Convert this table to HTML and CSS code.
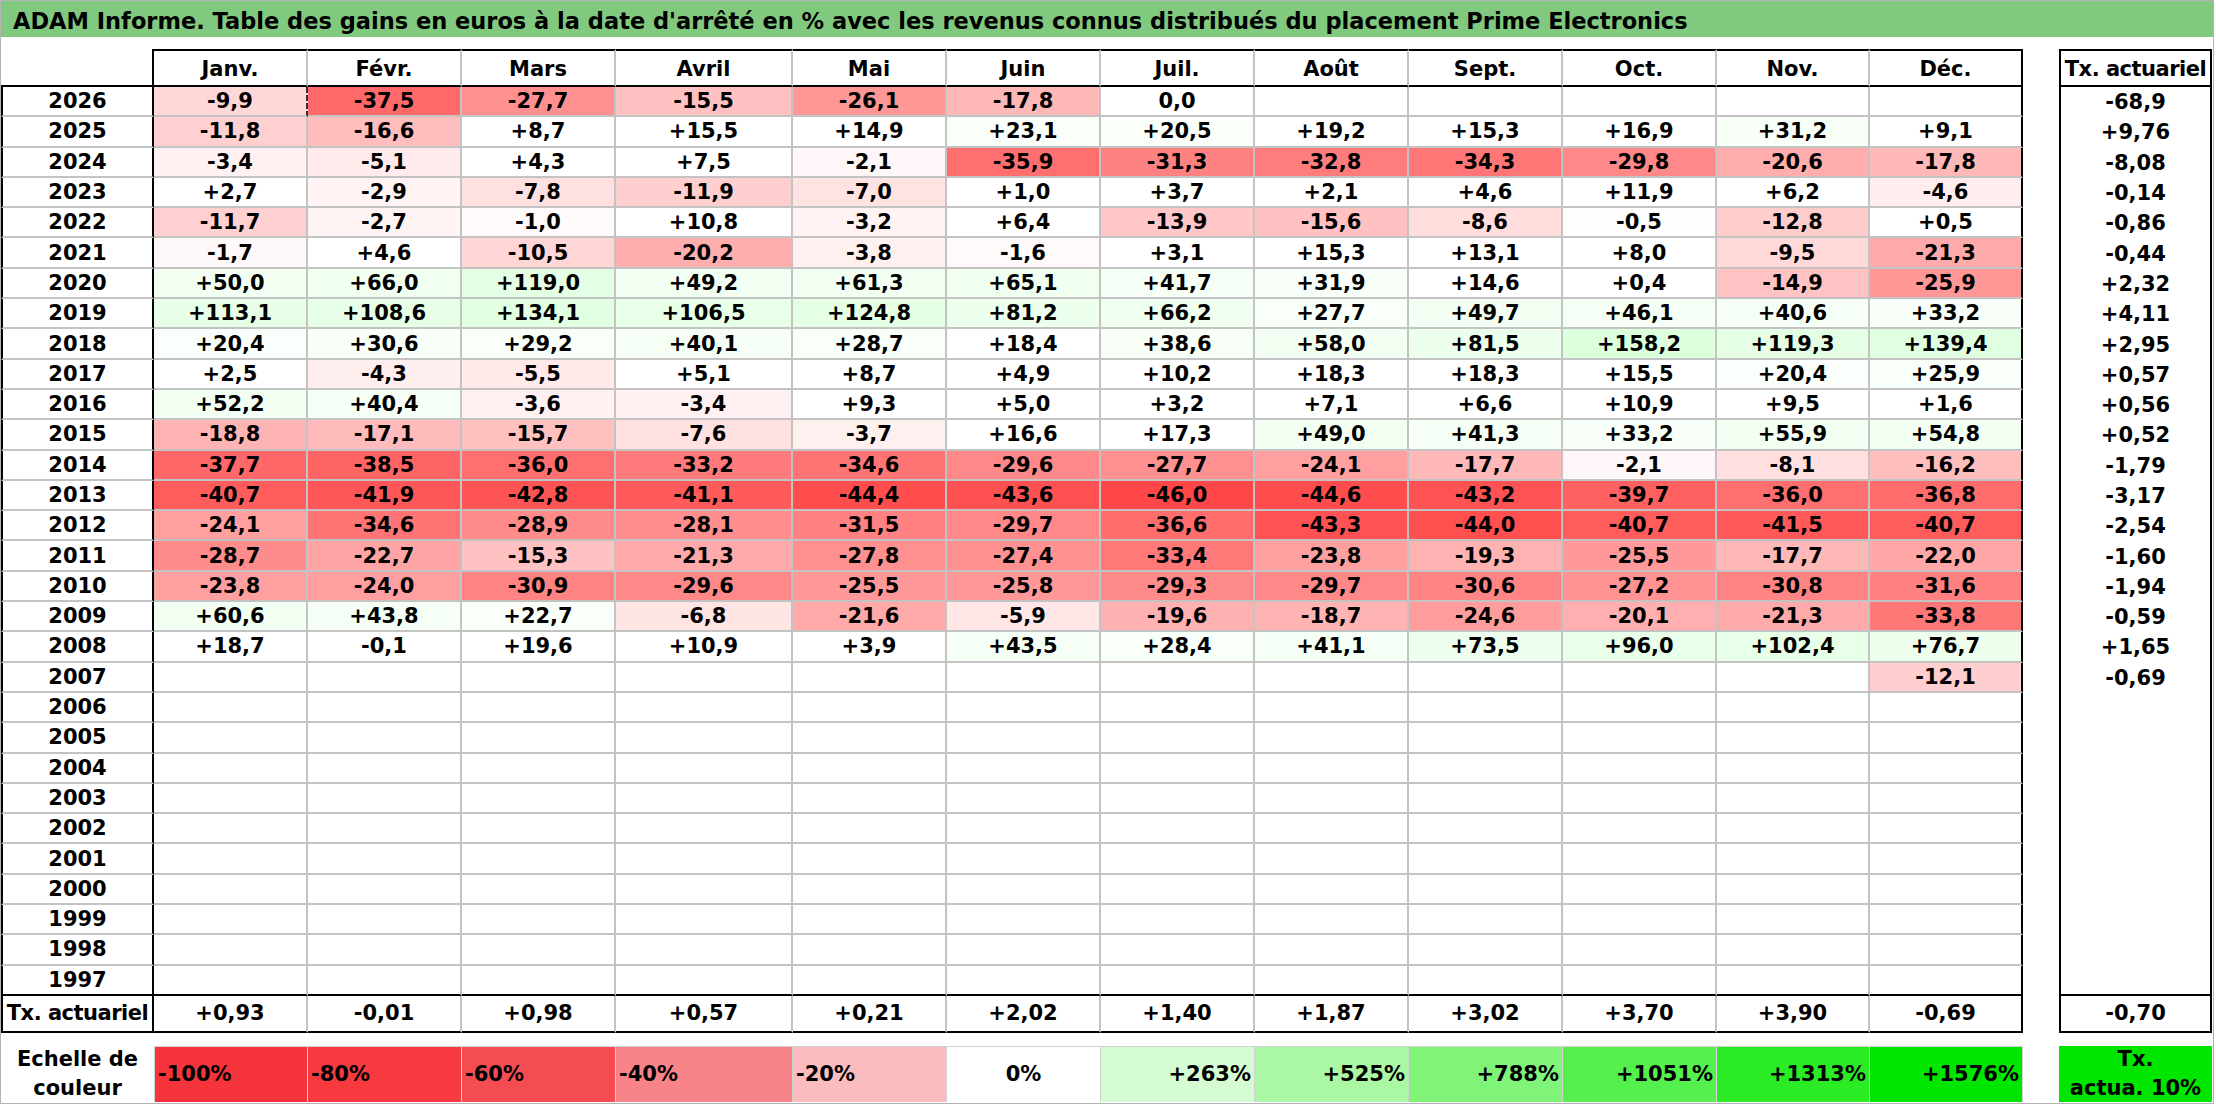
FILE: index.html
```html
<!DOCTYPE html>
<html lang="fr">
<head>
<meta charset="utf-8">
<title>ADAM Informe</title>
<link rel="stylesheet" href="styles.css">
</head>
<body>
<div class="sheet">
  <div class="title">ADAM Informe. Table des gains en euros à la date d'arrêté en % avec les revenus connus distribués du placement Prime Electronics</div>
  <div class="grid">
    <div class="row head"><div class="yh"></div><div class="mh">Janv.</div><div class="mh">Févr.</div><div class="mh">Mars</div><div class="mh">Avril</div><div class="mh">Mai</div><div class="mh">Juin</div><div class="mh">Juil.</div><div class="mh">Août</div><div class="mh">Sept.</div><div class="mh">Oct.</div><div class="mh">Nov.</div><div class="mh d">Déc.</div><div class="g"></div><div class="th lbl">Tx. actuariel</div></div>

    <div class="row"><div class="y">2026</div><div class="m ants" style="background:rgb(255,215,215)">-9,9</div><div class="m" style="background:rgb(255,105,105)">-37,5</div><div class="m" style="background:rgb(255,144,144)">-27,7</div><div class="m" style="background:rgb(255,193,193)">-15,5</div><div class="m" style="background:rgb(255,151,151)">-26,1</div><div class="m" style="background:rgb(255,184,184)">-17,8</div><div class="m">0,0</div><div class="m"></div><div class="m"></div><div class="m"></div><div class="m"></div><div class="m d"></div><div class="g"></div><div class="t">-68,9</div></div>

    <div class="row"><div class="y">2025</div><div class="m" style="background:rgb(255,208,208)">-11,8</div><div class="m" style="background:rgb(255,189,189)">-16,6</div><div class="m">+8,7</div><div class="m">+15,5</div><div class="m">+14,9</div><div class="m" style="background:rgb(250,255,250)">+23,1</div><div class="m" style="background:rgb(250,255,250)">+20,5</div><div class="m">+19,2</div><div class="m">+15,3</div><div class="m">+16,9</div><div class="m" style="background:rgb(247,255,247)">+31,2</div><div class="m d">+9,1</div><div class="g"></div><div class="t">+9,76</div></div>

    <div class="row"><div class="y">2024</div><div class="m" style="background:rgb(255,241,241)">-3,4</div><div class="m" style="background:rgb(255,235,235)">-5,1</div><div class="m">+4,3</div><div class="m">+7,5</div><div class="m" style="background:rgb(255,247,247)">-2,1</div><div class="m" style="background:rgb(255,111,111)">-35,9</div><div class="m" style="background:rgb(255,130,130)">-31,3</div><div class="m" style="background:rgb(255,124,124)">-32,8</div><div class="m" style="background:rgb(255,118,118)">-34,3</div><div class="m" style="background:rgb(255,136,136)">-29,8</div><div class="m" style="background:rgb(255,173,173)">-20,6</div><div class="m d" style="background:rgb(255,184,184)">-17,8</div><div class="g"></div><div class="t">-8,08</div></div>

    <div class="row"><div class="y">2023</div><div class="m">+2,7</div><div class="m" style="background:rgb(255,243,243)">-2,9</div><div class="m" style="background:rgb(255,224,224)">-7,8</div><div class="m" style="background:rgb(255,207,207)">-11,9</div><div class="m" style="background:rgb(255,227,227)">-7,0</div><div class="m">+1,0</div><div class="m">+3,7</div><div class="m">+2,1</div><div class="m">+4,6</div><div class="m">+11,9</div><div class="m">+6,2</div><div class="m d" style="background:rgb(255,237,237)">-4,6</div><div class="g"></div><div class="t">-0,14</div></div>

    <div class="row"><div class="y">2022</div><div class="m" style="background:rgb(255,208,208)">-11,7</div><div class="m" style="background:rgb(255,244,244)">-2,7</div><div class="m" style="background:rgb(255,251,251)">-1,0</div><div class="m">+10,8</div><div class="m" style="background:rgb(255,242,242)">-3,2</div><div class="m">+6,4</div><div class="m" style="background:rgb(255,199,199)">-13,9</div><div class="m" style="background:rgb(255,193,193)">-15,6</div><div class="m" style="background:rgb(255,221,221)">-8,6</div><div class="m" style="background:rgb(255,253,253)">-0,5</div><div class="m" style="background:rgb(255,204,204)">-12,8</div><div class="m d">+0,5</div><div class="g"></div><div class="t">-0,86</div></div>

    <div class="row"><div class="y">2021</div><div class="m" style="background:rgb(255,248,248)">-1,7</div><div class="m">+4,6</div><div class="m" style="background:rgb(255,213,213)">-10,5</div><div class="m" style="background:rgb(255,174,174)">-20,2</div><div class="m" style="background:rgb(255,240,240)">-3,8</div><div class="m" style="background:rgb(255,249,249)">-1,6</div><div class="m">+3,1</div><div class="m">+15,3</div><div class="m">+13,1</div><div class="m">+8,0</div><div class="m" style="background:rgb(255,217,217)">-9,5</div><div class="m d" style="background:rgb(255,170,170)">-21,3</div><div class="g"></div><div class="t">-0,44</div></div>

    <div class="row"><div class="y">2020</div><div class="m" style="background:rgb(244,255,244)">+50,0</div><div class="m" style="background:rgb(240,255,240)">+66,0</div><div class="m" style="background:rgb(229,255,229)">+119,0</div><div class="m" style="background:rgb(244,255,244)">+49,2</div><div class="m" style="background:rgb(242,255,242)">+61,3</div><div class="m" style="background:rgb(241,255,241)">+65,1</div><div class="m" style="background:rgb(246,255,246)">+41,7</div><div class="m" style="background:rgb(248,255,248)">+31,9</div><div class="m">+14,6</div><div class="m">+0,4</div><div class="m" style="background:rgb(255,195,195)">-14,9</div><div class="m d" style="background:rgb(255,151,151)">-25,9</div><div class="g"></div><div class="t">+2,32</div></div>

    <div class="row"><div class="y">2019</div><div class="m" style="background:rgb(230,255,230)">+113,1</div><div class="m" style="background:rgb(231,255,231)">+108,6</div><div class="m" style="background:rgb(225,255,225)">+134,1</div><div class="m" style="background:rgb(232,255,232)">+106,5</div><div class="m" style="background:rgb(228,255,228)">+124,8</div><div class="m" style="background:rgb(237,255,237)">+81,2</div><div class="m" style="background:rgb(240,255,240)">+66,2</div><div class="m" style="background:rgb(249,255,249)">+27,7</div><div class="m" style="background:rgb(244,255,244)">+49,7</div><div class="m" style="background:rgb(245,255,245)">+46,1</div><div class="m" style="background:rgb(246,255,246)">+40,6</div><div class="m d" style="background:rgb(248,255,248)">+33,2</div><div class="g"></div><div class="t">+4,11</div></div>

    <div class="row"><div class="y">2018</div><div class="m" style="background:rgb(251,255,251)">+20,4</div><div class="m" style="background:rgb(248,255,248)">+30,6</div><div class="m" style="background:rgb(249,255,249)">+29,2</div><div class="m" style="background:rgb(246,255,246)">+40,1</div><div class="m" style="background:rgb(249,255,249)">+28,7</div><div class="m">+18,4</div><div class="m" style="background:rgb(247,255,247)">+38,6</div><div class="m" style="background:rgb(242,255,242)">+58,0</div><div class="m" style="background:rgb(237,255,237)">+81,5</div><div class="m" style="background:rgb(220,255,220)">+158,2</div><div class="m" style="background:rgb(229,255,229)">+119,3</div><div class="m d" style="background:rgb(224,255,224)">+139,4</div><div class="g"></div><div class="t">+2,95</div></div>

    <div class="row"><div class="y">2017</div><div class="m">+2,5</div><div class="m" style="background:rgb(255,238,238)">-4,3</div><div class="m" style="background:rgb(255,233,233)">-5,5</div><div class="m">+5,1</div><div class="m">+8,7</div><div class="m">+4,9</div><div class="m">+10,2</div><div class="m">+18,3</div><div class="m">+18,3</div><div class="m">+15,5</div><div class="m" style="background:rgb(251,255,251)">+20,4</div><div class="m d" style="background:rgb(249,255,249)">+25,9</div><div class="g"></div><div class="t">+0,57</div></div>

    <div class="row"><div class="y">2016</div><div class="m" style="background:rgb(244,255,244)">+52,2</div><div class="m" style="background:rgb(246,255,246)">+40,4</div><div class="m" style="background:rgb(255,241,241)">-3,6</div><div class="m" style="background:rgb(255,241,241)">-3,4</div><div class="m">+9,3</div><div class="m">+5,0</div><div class="m">+3,2</div><div class="m">+7,1</div><div class="m">+6,6</div><div class="m">+10,9</div><div class="m">+9,5</div><div class="m d">+1,6</div><div class="g"></div><div class="t">+0,56</div></div>

    <div class="row"><div class="y">2015</div><div class="m" style="background:rgb(255,180,180)">-18,8</div><div class="m" style="background:rgb(255,187,187)">-17,1</div><div class="m" style="background:rgb(255,192,192)">-15,7</div><div class="m" style="background:rgb(255,225,225)">-7,6</div><div class="m" style="background:rgb(255,240,240)">-3,7</div><div class="m">+16,6</div><div class="m">+17,3</div><div class="m" style="background:rgb(244,255,244)">+49,0</div><div class="m" style="background:rgb(246,255,246)">+41,3</div><div class="m" style="background:rgb(248,255,248)">+33,2</div><div class="m" style="background:rgb(243,255,243)">+55,9</div><div class="m d" style="background:rgb(243,255,243)">+54,8</div><div class="g"></div><div class="t">+0,52</div></div>

    <div class="row"><div class="y">2014</div><div class="m" style="background:rgb(255,104,104)">-37,7</div><div class="m" style="background:rgb(255,101,101)">-38,5</div><div class="m" style="background:rgb(255,111,111)">-36,0</div><div class="m" style="background:rgb(255,122,122)">-33,2</div><div class="m" style="background:rgb(255,117,117)">-34,6</div><div class="m" style="background:rgb(255,137,137)">-29,6</div><div class="m" style="background:rgb(255,144,144)">-27,7</div><div class="m" style="background:rgb(255,159,159)">-24,1</div><div class="m" style="background:rgb(255,184,184)">-17,7</div><div class="m" style="background:rgb(255,247,247)">-2,1</div><div class="m" style="background:rgb(255,223,223)">-8,1</div><div class="m d" style="background:rgb(255,190,190)">-16,2</div><div class="g"></div><div class="t">-1,79</div></div>

    <div class="row"><div class="y">2013</div><div class="m" style="background:rgb(255,92,92)">-40,7</div><div class="m" style="background:rgb(255,87,87)">-41,9</div><div class="m" style="background:rgb(255,84,84)">-42,8</div><div class="m" style="background:rgb(255,91,91)">-41,1</div><div class="m" style="background:rgb(255,77,77)">-44,4</div><div class="m" style="background:rgb(255,81,81)">-43,6</div><div class="m" style="background:rgb(255,71,71)">-46,0</div><div class="m" style="background:rgb(255,77,77)">-44,6</div><div class="m" style="background:rgb(255,82,82)">-43,2</div><div class="m" style="background:rgb(255,96,96)">-39,7</div><div class="m" style="background:rgb(255,111,111)">-36,0</div><div class="m d" style="background:rgb(255,108,108)">-36,8</div><div class="g"></div><div class="t">-3,17</div></div>

    <div class="row"><div class="y">2012</div><div class="m" style="background:rgb(255,159,159)">-24,1</div><div class="m" style="background:rgb(255,117,117)">-34,6</div><div class="m" style="background:rgb(255,139,139)">-28,9</div><div class="m" style="background:rgb(255,143,143)">-28,1</div><div class="m" style="background:rgb(255,129,129)">-31,5</div><div class="m" style="background:rgb(255,136,136)">-29,7</div><div class="m" style="background:rgb(255,109,109)">-36,6</div><div class="m" style="background:rgb(255,82,82)">-43,3</div><div class="m" style="background:rgb(255,79,79)">-44,0</div><div class="m" style="background:rgb(255,92,92)">-40,7</div><div class="m" style="background:rgb(255,89,89)">-41,5</div><div class="m d" style="background:rgb(255,92,92)">-40,7</div><div class="g"></div><div class="t">-2,54</div></div>

    <div class="row"><div class="y">2011</div><div class="m" style="background:rgb(255,140,140)">-28,7</div><div class="m" style="background:rgb(255,164,164)">-22,7</div><div class="m" style="background:rgb(255,194,194)">-15,3</div><div class="m" style="background:rgb(255,170,170)">-21,3</div><div class="m" style="background:rgb(255,144,144)">-27,8</div><div class="m" style="background:rgb(255,145,145)">-27,4</div><div class="m" style="background:rgb(255,121,121)">-33,4</div><div class="m" style="background:rgb(255,160,160)">-23,8</div><div class="m" style="background:rgb(255,178,178)">-19,3</div><div class="m" style="background:rgb(255,153,153)">-25,5</div><div class="m" style="background:rgb(255,184,184)">-17,7</div><div class="m d" style="background:rgb(255,167,167)">-22,0</div><div class="g"></div><div class="t">-1,60</div></div>

    <div class="row"><div class="y">2010</div><div class="m" style="background:rgb(255,160,160)">-23,8</div><div class="m" style="background:rgb(255,159,159)">-24,0</div><div class="m" style="background:rgb(255,131,131)">-30,9</div><div class="m" style="background:rgb(255,137,137)">-29,6</div><div class="m" style="background:rgb(255,153,153)">-25,5</div><div class="m" style="background:rgb(255,152,152)">-25,8</div><div class="m" style="background:rgb(255,138,138)">-29,3</div><div class="m" style="background:rgb(255,136,136)">-29,7</div><div class="m" style="background:rgb(255,133,133)">-30,6</div><div class="m" style="background:rgb(255,146,146)">-27,2</div><div class="m" style="background:rgb(255,132,132)">-30,8</div><div class="m d" style="background:rgb(255,129,129)">-31,6</div><div class="g"></div><div class="t">-1,94</div></div>

    <div class="row"><div class="y">2009</div><div class="m" style="background:rgb(242,255,242)">+60,6</div><div class="m" style="background:rgb(245,255,245)">+43,8</div><div class="m" style="background:rgb(250,255,250)">+22,7</div><div class="m" style="background:rgb(255,228,228)">-6,8</div><div class="m" style="background:rgb(255,169,169)">-21,6</div><div class="m" style="background:rgb(255,231,231)">-5,9</div><div class="m" style="background:rgb(255,177,177)">-19,6</div><div class="m" style="background:rgb(255,180,180)">-18,7</div><div class="m" style="background:rgb(255,157,157)">-24,6</div><div class="m" style="background:rgb(255,175,175)">-20,1</div><div class="m" style="background:rgb(255,170,170)">-21,3</div><div class="m d" style="background:rgb(255,120,120)">-33,8</div><div class="g"></div><div class="t">-0,59</div></div>

    <div class="row"><div class="y">2008</div><div class="m">+18,7</div><div class="m">-0,1</div><div class="m">+19,6</div><div class="m">+10,9</div><div class="m">+3,9</div><div class="m" style="background:rgb(245,255,245)">+43,5</div><div class="m" style="background:rgb(249,255,249)">+28,4</div><div class="m" style="background:rgb(246,255,246)">+41,1</div><div class="m" style="background:rgb(239,255,239)">+73,5</div><div class="m" style="background:rgb(234,255,234)">+96,0</div><div class="m" style="background:rgb(232,255,232)">+102,4</div><div class="m d" style="background:rgb(238,255,238)">+76,7</div><div class="g"></div><div class="t">+1,65</div></div>

    <div class="row"><div class="y">2007</div><div class="m"></div><div class="m"></div><div class="m"></div><div class="m"></div><div class="m"></div><div class="m"></div><div class="m"></div><div class="m"></div><div class="m"></div><div class="m"></div><div class="m"></div><div class="m d" style="background:rgb(255,207,207)">-12,1</div><div class="g"></div><div class="t">-0,69</div></div>

    <div class="row"><div class="y">2006</div><div class="m"></div><div class="m"></div><div class="m"></div><div class="m"></div><div class="m"></div><div class="m"></div><div class="m"></div><div class="m"></div><div class="m"></div><div class="m"></div><div class="m"></div><div class="m d"></div><div class="g"></div><div class="t"></div></div>
    <div class="row"><div class="y">2005</div><div class="m"></div><div class="m"></div><div class="m"></div><div class="m"></div><div class="m"></div><div class="m"></div><div class="m"></div><div class="m"></div><div class="m"></div><div class="m"></div><div class="m"></div><div class="m d"></div><div class="g"></div><div class="t"></div></div>
    <div class="row"><div class="y">2004</div><div class="m"></div><div class="m"></div><div class="m"></div><div class="m"></div><div class="m"></div><div class="m"></div><div class="m"></div><div class="m"></div><div class="m"></div><div class="m"></div><div class="m"></div><div class="m d"></div><div class="g"></div><div class="t"></div></div>
    <div class="row"><div class="y">2003</div><div class="m"></div><div class="m"></div><div class="m"></div><div class="m"></div><div class="m"></div><div class="m"></div><div class="m"></div><div class="m"></div><div class="m"></div><div class="m"></div><div class="m"></div><div class="m d"></div><div class="g"></div><div class="t"></div></div>
    <div class="row"><div class="y">2002</div><div class="m"></div><div class="m"></div><div class="m"></div><div class="m"></div><div class="m"></div><div class="m"></div><div class="m"></div><div class="m"></div><div class="m"></div><div class="m"></div><div class="m"></div><div class="m d"></div><div class="g"></div><div class="t"></div></div>
    <div class="row"><div class="y">2001</div><div class="m"></div><div class="m"></div><div class="m"></div><div class="m"></div><div class="m"></div><div class="m"></div><div class="m"></div><div class="m"></div><div class="m"></div><div class="m"></div><div class="m"></div><div class="m d"></div><div class="g"></div><div class="t"></div></div>
    <div class="row"><div class="y">2000</div><div class="m"></div><div class="m"></div><div class="m"></div><div class="m"></div><div class="m"></div><div class="m"></div><div class="m"></div><div class="m"></div><div class="m"></div><div class="m"></div><div class="m"></div><div class="m d"></div><div class="g"></div><div class="t"></div></div>
    <div class="row"><div class="y">1999</div><div class="m"></div><div class="m"></div><div class="m"></div><div class="m"></div><div class="m"></div><div class="m"></div><div class="m"></div><div class="m"></div><div class="m"></div><div class="m"></div><div class="m"></div><div class="m d"></div><div class="g"></div><div class="t"></div></div>
    <div class="row"><div class="y">1998</div><div class="m"></div><div class="m"></div><div class="m"></div><div class="m"></div><div class="m"></div><div class="m"></div><div class="m"></div><div class="m"></div><div class="m"></div><div class="m"></div><div class="m"></div><div class="m d"></div><div class="g"></div><div class="t"></div></div>
    <div class="row last"><div class="y">1997</div><div class="m"></div><div class="m"></div><div class="m"></div><div class="m"></div><div class="m"></div><div class="m"></div><div class="m"></div><div class="m"></div><div class="m"></div><div class="m"></div><div class="m"></div><div class="m d"></div><div class="g"></div><div class="t"></div></div>

    <div class="row tot"><div class="y lbl">Tx. actuariel</div><div class="m">+0,93</div><div class="m">-0,01</div><div class="m">+0,98</div><div class="m">+0,57</div><div class="m">+0,21</div><div class="m">+2,02</div><div class="m">+1,40</div><div class="m">+1,87</div><div class="m">+3,02</div><div class="m">+3,70</div><div class="m">+3,90</div><div class="m d">-0,69</div><div class="g"></div><div class="t">-0,70</div></div>

    <div class="row"><div class="sp"></div></div>

    <div class="row legend"><div class="lh"><span>Echelle de<br>couleur</span></div><div class="lg l first" style="background:#f5343b">-100%</div><div class="lg l" style="background:#f63a40">-80%</div><div class="lg l" style="background:#f54c52">-60%</div><div class="lg l" style="background:#f88388">-40%</div><div class="lg l" style="background:#fbbcbf">-20%</div><div class="lg">0%</div><div class="lg r" style="background:#d5fbd2">+263%</div><div class="lg r" style="background:#aaf7a4">+525%</div><div class="lg r" style="background:#80f379">+788%</div><div class="lg r" style="background:#55ef4e">+1051%</div><div class="lg r" style="background:#2beb24">+1313%</div><div class="lg r" style="background:#00e600">+1576%</div><div class="g"></div><div class="lt"><span>Tx.<br>actua. 10%</span></div></div>
  </div>
</div>
</body>
</html>
```
FILE: styles.css
```css
* { box-sizing: border-box; }
html, body { margin: 0; padding: 0; background: #fff; }
body {
  font-family: "DejaVu Sans", "Liberation Sans", sans-serif;
  font-weight: bold;
  color: #000;
}
.sheet {
  width: 2214px;
  height: 1104px;
  border: 1px solid #b4b4b4;
  overflow: hidden;
}
.title {
  height: 36px;
  background: #80c97f;
  font-size: 22.5px;
  padding: 3px 0 0 12px;
  display: flex;
  align-items: center;
  white-space: nowrap;
}
.grid {
  margin-top: 12px;
  display: grid;
  grid-template-columns: 153px 154px 154px 154px 177px 154px 154px 154px 154px 154px 154px 153px 153px 36px 153px;
  grid-template-rows: 38px repeat(30, 30.3px) 37px 13px 56px;
  font-size: 21px;
}
.row { display: contents; }
.row > div {
  display: flex;
  align-items: center;
  justify-content: center;
  white-space: nowrap;
}
/* header */
.yh { border-right: 2px solid #000; border-bottom: 2px solid #000; }
.mh {
  border-top: 2px solid #000;
  border-bottom: 2px solid #000;
  border-right: 2px solid #c3c3c3;
  padding-top: 2px;
}
.mh.d { border-right-color: #000; }
.th { border: 2px solid #000; padding-top: 2px; }
.lbl { letter-spacing: -0.5px; }
/* body */
.y {
  border-left: 2px solid #000;
  border-right: 2px solid #000;
  border-bottom: 2px solid #c3c3c3;
}
.m {
  border-right: 2px solid #c3c3c3;
  border-bottom: 2px solid #c3c3c3;
}
.m.d { border-right-color: #000; }
.m.ants { border-right: 2px dashed #333; }
.t {
  border-left: 2px solid #000;
  border-right: 2px solid #000;
}
.last .y, .last .m { border-bottom-color: #000; }
.last .t { border-bottom: 2px solid #000; }
.tot .y, .tot .m { border-bottom: 2px solid #000; }
.tot .t { border-bottom: 2px solid #000; }
.sp { grid-column: 1 / -1; }
/* legend */
.lh, .lt { line-height: 29px; text-align: center; }
.lt { background: #00e600; }
.lg {
  border-top: 1px solid #d2d2d2;
  border-right: 1px solid #d2d2d2;
}
.lg.first { border-left: 1px solid #d2d2d2; }
.row > .lg.l { justify-content: flex-start; padding-left: 3px; }
.row > .lg.r { justify-content: flex-end; padding-right: 3px; }
```
